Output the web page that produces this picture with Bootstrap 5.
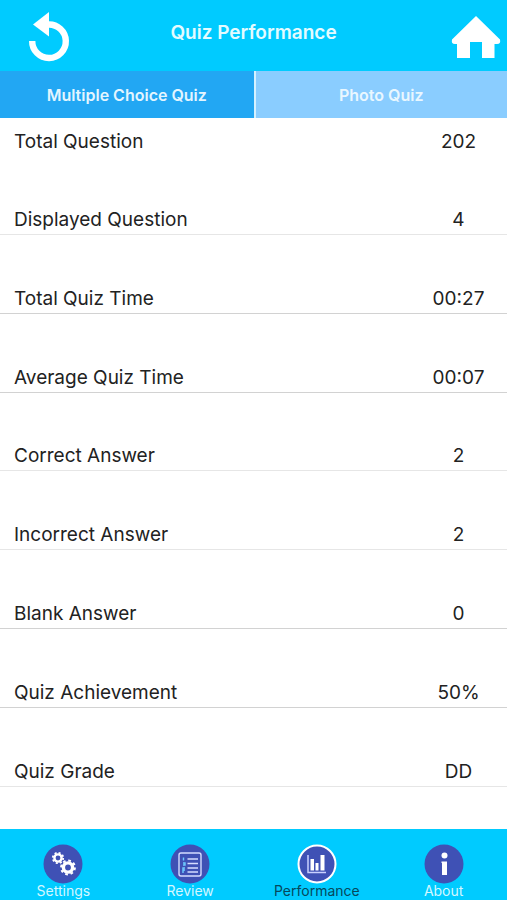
<!DOCTYPE html>
<html lang="en">
<head>
<meta charset="utf-8">
<meta name="viewport" content="width=device-width, initial-scale=1">
<title>Quiz Performance</title>
<link rel="stylesheet" href="https://cdn.jsdelivr.net/npm/bootstrap@5.3.0/dist/css/bootstrap.min.css">
<style>
body { font-family: Inter, "Liberation Sans", sans-serif; background: #fff; color: #222; }
.bar { background: #00cbff; }
.top-bar { height: 71px; padding: 0 4px; }
.top-bar h1 { font-size: 19px; line-height: 24px; padding-top: 21px; margin: 0; font-weight: 600; color: #e4fbff; }
.side { width: 72px; }
.side.start { padding-left: 20px; }
.icon-btn { line-height: 0; }
.quiz-tab { height: 47px; font-size: 16px; font-weight: 600; line-height: 24px; border: 0; border-radius: 0; color: #e2f5ff; background: #22a7f3; }
.quiz-tab.other { background: #8acdff; border-left: 2px solid #d5f1ff; color: #e9f7ff; }
.results { padding-bottom: 42px; }
.stats { color: #222; font-size: 19px; line-height: 24px; }
.stats th, .stats td { font-weight: 400; vertical-align: bottom; padding: 0 0 2px; border-bottom: 1px solid #d2d2d2; }
.stats .soft > * { border-color: #e6e6e6; }
.stats th { padding-left: 14px; }
.stats td { width: 97px; text-align: center; }
.stats tr:first-child { height: 39px; }
.stats tr:first-child > * { border: 0; vertical-align: top; padding-top: 12px; padding-bottom: 0; }
.bottom-bar { height: 71px; padding-top: 15px; }
.bottom-bar a { color: #d3f7ff; font-size: 14px; line-height: 14px; }
.bottom-bar a.current { color: #06485c; }
</style>
<script src="https://cdn.jsdelivr.net/npm/bootstrap@5.3.0/dist/js/bootstrap.bundle.min.js" defer></script>
</head>
<body>
<div class="d-flex flex-column min-vh-100">
  <header class="bar top-bar d-flex justify-content-between align-items-start">
    <div class="side start pt-2">
      <button type="button" class="icon-btn btn p-0 border-0" aria-label="Restart">
        <svg width="50" height="58" viewBox="0 0 50 58"><path d="M24 16.500A16.800 16.800 0 1 1 8.200 33" fill="none" stroke="#fff" stroke-width="6.400"/><path d="M9 16.500L25 4V28.500Z" fill="#fff"/></svg>
      </button>
    </div>
    <h1>Quiz Performance</h1>
    <div class="side pt-3 text-end">
      <button type="button" class="icon-btn btn p-0 border-0" aria-label="Home">
        <svg width="52" height="44" viewBox="0 0 52 44"><path d="M25 0L49 23.500Q50 28 46 28H43.500V42H31V26H19V42H6V28H4Q0 28 1 23.500Z" fill="#fff"/></svg>
      </button>
    </div>
  </header>
  <div class="d-flex" role="tablist">
    <button type="button" class="quiz-tab w-50" role="tab" aria-selected="true">Multiple Choice Quiz</button>
    <button type="button" class="quiz-tab other w-50" role="tab" aria-selected="false">Photo Quiz</button>
  </div>
  <main class="results flex-fill d-grid">
    <table class="stats w-100 h-100">
      <tbody>
        <tr><th scope="row">Total Question</th><td>202</td></tr>
        <tr class="soft"><th scope="row">Displayed Question</th><td>4</td></tr>
        <tr><th scope="row">Total Quiz Time</th><td>00:27</td></tr>
        <tr><th scope="row">Average Quiz Time</th><td>00:07</td></tr>
        <tr class="soft"><th scope="row">Correct Answer</th><td>2</td></tr>
        <tr class="soft"><th scope="row">Incorrect Answer</th><td>2</td></tr>
        <tr><th scope="row">Blank Answer</th><td>0</td></tr>
        <tr><th scope="row">Quiz Achievement</th><td>50%</td></tr>
        <tr class="soft"><th scope="row">Quiz Grade</th><td>DD</td></tr>
      </tbody>
    </table>
  </main>
  <nav class="bar bottom-bar d-flex" aria-label="Main">
    <a href="#" class="w-25 d-flex flex-column align-items-center text-decoration-none">
      <svg width="40" height="40" viewBox="0 0 40 40"><circle cx="20" cy="20" r="19.500" fill="#3f51b5"/><g fill="none" stroke="#fff"><circle cx="15" cy="14" r="3.600" stroke-width="2.400"/><circle cx="15" cy="14" r="5.200" stroke-width="1.800" stroke-dasharray="2.040 2.040"/><circle cx="25" cy="23.500" r="4.600" stroke-width="3.400"/><circle cx="25" cy="23.500" r="6.900" stroke-width="2" stroke-dasharray="2.710 2.710"/></g></svg>
      <span>Settings</span>
    </a>
    <a href="#" class="w-25 d-flex flex-column align-items-center text-decoration-none">
      <svg width="40" height="40" viewBox="0 0 40 40"><circle cx="20" cy="20" r="19.500" fill="#3f51b5"/><g fill="none" stroke="#d5dcff" stroke-width="1.400"><rect x="9" y="9" width="22" height="23" rx="2"/><path d="M17.500 15H28M17.500 19.500H28M17.500 24H28M17.500 28H28"/><path stroke="#6ecbff" d="M13.500 13.500V16.500M13 19H15V21H13M15 24H13V26H15M13 24V29"/></g></svg>
      <span>Review</span>
    </a>
    <a href="#" class="current w-25 d-flex flex-column align-items-center text-decoration-none" aria-current="page">
      <svg width="40" height="40" viewBox="0 0 40 40"><circle cx="20" cy="20" r="18.500" fill="#3f51b5" stroke="#fff" stroke-width="2"/><path d="M11 11V28.500H29" fill="none" stroke="#c9d0ff" stroke-width="1.500"/><path d="M13.500 15H17V26.500H13.500ZM18.500 19H21.500V26.500H18.500ZM23.500 11H27.500V26.500H23.500Z" fill="#fff"/></svg>
      <span>Performance</span>
    </a>
    <a href="#" class="w-25 d-flex flex-column align-items-center text-decoration-none">
      <svg width="40" height="40" viewBox="0 0 40 40"><circle cx="20" cy="20" r="19.500" fill="#3f51b5"/><circle cx="20.500" cy="11.500" r="3" fill="#fff"/><path d="M17.500 17.500H23V31H18V19H17.500Z" fill="#fff"/></svg>
      <span>About</span>
    </a>
  </nav>
</div>
</body>
</html>
